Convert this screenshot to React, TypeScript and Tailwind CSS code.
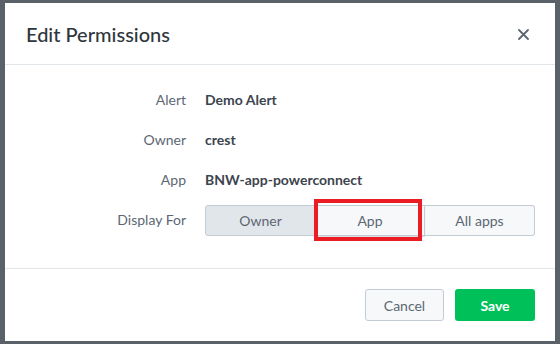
import React from 'react';

const labelFont = { fontFamily: 'Lato, "Open Sans", sans-serif' };

function Row({ label, children }: { label: string; children: React.ReactNode }) {
  return (
    <>
      <div className="flex h-10 items-center justify-end text-[14px] text-[#5c6773]">{label}</div>
      <div className="flex h-10 items-center text-[14px] font-bold text-[#3c444d]">{children}</div>
    </>
  );
}

export default function App() {
  return (
    <div className="h-[344px] w-[560px] bg-[#5b6169] pt-[3px] pl-[5px]" style={labelFont}>
      <div className="flex h-[338px] w-[550px] flex-col bg-white">
        {/* header */}
        <div className="flex h-[62px] items-center justify-between border-b border-[#e1e6eb] pl-[21px] pr-[26px]">
          <h2 className="text-[20px] font-medium text-[#2f363d]">Edit Permissions</h2>
          <svg width="11" height="11" viewBox="0 0 11 11" className="mt-[1px]">
            <path d="M1 1L10 10M10 1L1 10" stroke="#5c6773" strokeWidth="1.8" strokeLinecap="round" />
          </svg>
        </div>

        {/* body */}
        <div className="grid flex-1 grid-cols-[181px_1fr] content-start gap-x-[19px] border-b border-[#e1e6eb] pt-[14px] pr-[20px]">
          <Row label="Alert">Demo Alert</Row>
          <Row label="Owner">crest</Row>
          <Row label="App">BNW-app-powerconnect</Row>
          <div className="flex h-10 items-center justify-end text-[14px] text-[#5c6773]">Display For</div>
          <div className="flex h-10 items-center">
            <div className="mt-[3px] flex h-[31px] w-[330px]">
              <button className="flex-1 rounded-l-[3px] border border-[#c3cbd4] bg-[#e1e6eb] text-[14px] text-[#5c6773]">
                Owner
              </button>
              <div className="relative flex-1">
                <button className="h-full w-full border-y border-r border-[#c3cbd4] bg-[#f7f8fa] text-[14px] text-[#5c6773] shadow-[0_1px_1px_rgba(0,0,0,0.12)]">
                  App
                </button>
                <div className="pointer-events-none absolute top-[-6px] left-[-2px] h-[42px] w-[108px] border-[4px] border-[#ec1c24]" />
              </div>
              <button className="flex-1 rounded-r-[3px] border-y border-r border-[#c3cbd4] bg-[#f7f8fa] text-[14px] text-[#5c6773]">
                All apps
              </button>
            </div>
          </div>
        </div>

        {/* footer */}
        <div className="flex h-[72px] items-center justify-end gap-[11px] pr-[20px]">
          <button className="h-[32px] w-[79px] rounded-[3px] border border-[#c3cbd4] bg-[#f7f8fa] text-[14px] text-[#5c6773]">
            Cancel
          </button>
          <button className="h-[32px] w-[80px] rounded-[3px] bg-[#00c05a] text-[14px] font-bold text-white">
            Save
          </button>
        </div>
      </div>
    </div>
  );
}
